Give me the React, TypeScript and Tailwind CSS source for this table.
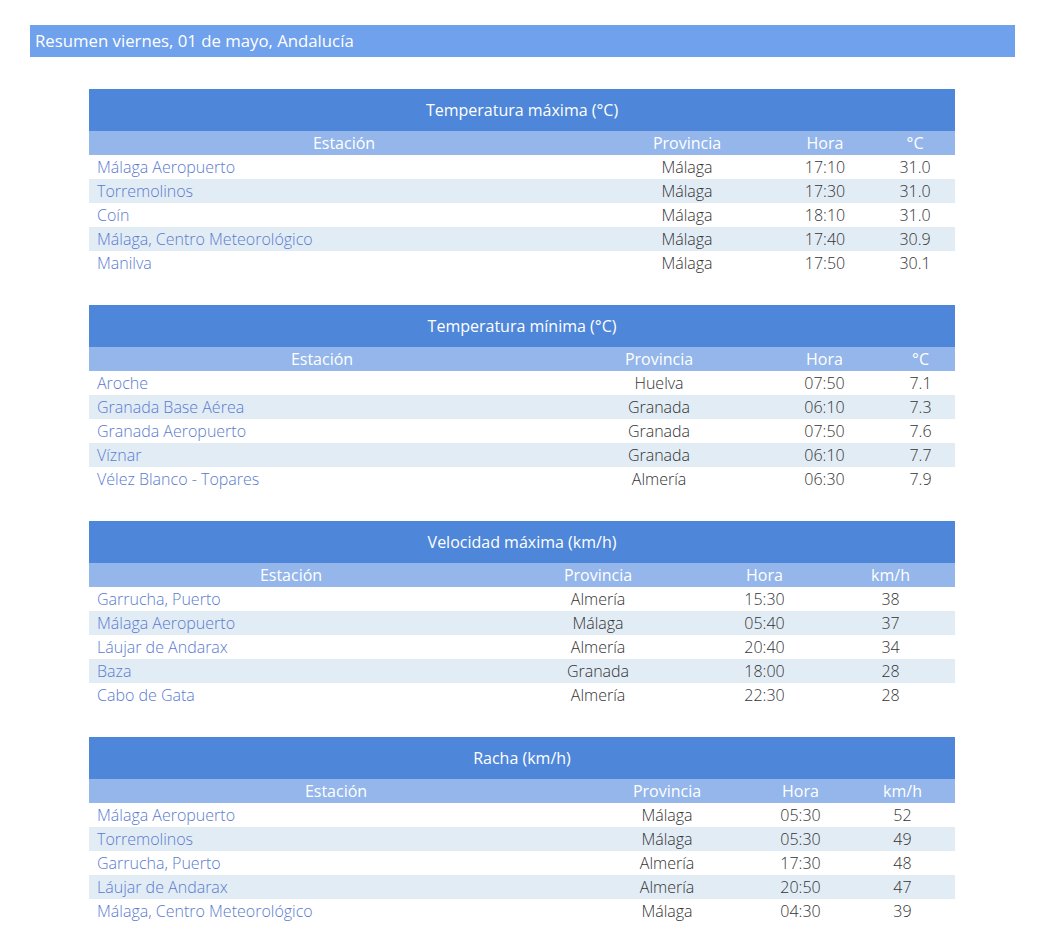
type Row = [string, string, string, string]

type Section = {
  title: string
  unit: string
  cols: [string, string, string, string]
  rows: Row[]
}

const sections: Section[] = [
  {
    title: 'Temperatura máxima (°C)',
    unit: '°C',
    cols: ['w-[510px]', 'w-[176px]', 'w-[100px]', 'w-[80px]'],
    rows: [
      ['Málaga Aeropuerto', 'Málaga', '17:10', '31.0'],
      ['Torremolinos', 'Málaga', '17:30', '31.0'],
      ['Coín', 'Málaga', '18:10', '31.0'],
      ['Málaga, Centro Meteorológico', 'Málaga', '17:40', '30.9'],
      ['Manilva', 'Málaga', '17:50', '30.1'],
    ],
  },
  {
    title: 'Temperatura mínima (°C)',
    unit: '°C',
    cols: ['w-[466px]', 'w-[208px]', 'w-[123px]', 'w-[69px]'],
    rows: [
      ['Aroche', 'Huelva', '07:50', '7.1'],
      ['Granada Base Aérea', 'Granada', '06:10', '7.3'],
      ['Granada Aeropuerto', 'Granada', '07:50', '7.6'],
      ['Víznar', 'Granada', '06:10', '7.7'],
      ['Vélez Blanco - Topares', 'Almería', '06:30', '7.9'],
    ],
  },
  {
    title: 'Velocidad máxima (km/h)',
    unit: 'km/h',
    cols: ['w-[404px]', 'w-[210px]', 'w-[123px]', 'w-[129px]'],
    rows: [
      ['Garrucha, Puerto', 'Almería', '15:30', '38'],
      ['Málaga Aeropuerto', 'Málaga', '05:40', '37'],
      ['Láujar de Andarax', 'Almería', '20:40', '34'],
      ['Baza', 'Granada', '18:00', '28'],
      ['Cabo de Gata', 'Almería', '22:30', '28'],
    ],
  },
  {
    title: 'Racha (km/h)',
    unit: 'km/h',
    cols: ['w-[494px]', 'w-[168px]', 'w-[99px]', 'w-[105px]'],
    rows: [
      ['Málaga Aeropuerto', 'Málaga', '05:30', '52'],
      ['Torremolinos', 'Málaga', '05:30', '49'],
      ['Garrucha, Puerto', 'Almería', '17:30', '48'],
      ['Láujar de Andarax', 'Almería', '20:50', '47'],
      ['Málaga, Centro Meteorológico', 'Málaga', '04:30', '39'],
    ],
  },
]

function SummaryTable({ section }: { section: Section }) {
  return (
    <table className="w-full table-fixed border-collapse mb-[30px]">
      <colgroup>
        {section.cols.map((c, i) => (
          <col key={i} className={c} />
        ))}
      </colgroup>
      <thead>
        <tr>
          <th colSpan={4} className="h-[42px] p-0 bg-[#4e86d9] text-white font-normal text-center">
            {section.title}
          </th>
        </tr>
        <tr className="bg-[#94b6ea] text-white">
          <th className="h-6 p-0 font-normal text-center">Estación</th>
          <th className="h-6 p-0 font-normal text-center">Provincia</th>
          <th className="h-6 p-0 font-normal text-center">Hora</th>
          <th className="h-6 p-0 font-normal text-center">{section.unit}</th>
        </tr>
      </thead>
      <tbody>
        {section.rows.map((row, i) => (
          <tr key={i} className={i % 2 === 1 ? 'bg-[#e2ecf5]' : 'bg-white'}>
            <td className="h-6 py-0 pl-2 text-left">
              <a href="#" className="text-[#5a7bcf]">{row[0]}</a>
            </td>
            <td className="h-6 p-0 text-center">{row[1]}</td>
            <td className="h-6 p-0 text-center">{row[2]}</td>
            <td className="h-6 p-0 text-center">{row[3]}</td>
          </tr>
        ))}
      </tbody>
    </table>
  )
}

export default function App() {
  return (
    <div className="min-h-screen bg-white pt-[25px] px-[23px] font-['Open_Sans',sans-serif] font-light text-base leading-6 text-[#333]">
      <div className="h-8 bg-[#70a1ec] text-white text-[16.75px] font-normal flex items-center pl-[5px] ml-[7px]">
        Resumen viernes, 01 de mayo, Andalucía
      </div>
      <div className="mt-8 ml-[66px] mr-[60px]">
        {sections.map((s) => (
          <SummaryTable key={s.title} section={s} />
        ))}
      </div>
    </div>
  )
}
